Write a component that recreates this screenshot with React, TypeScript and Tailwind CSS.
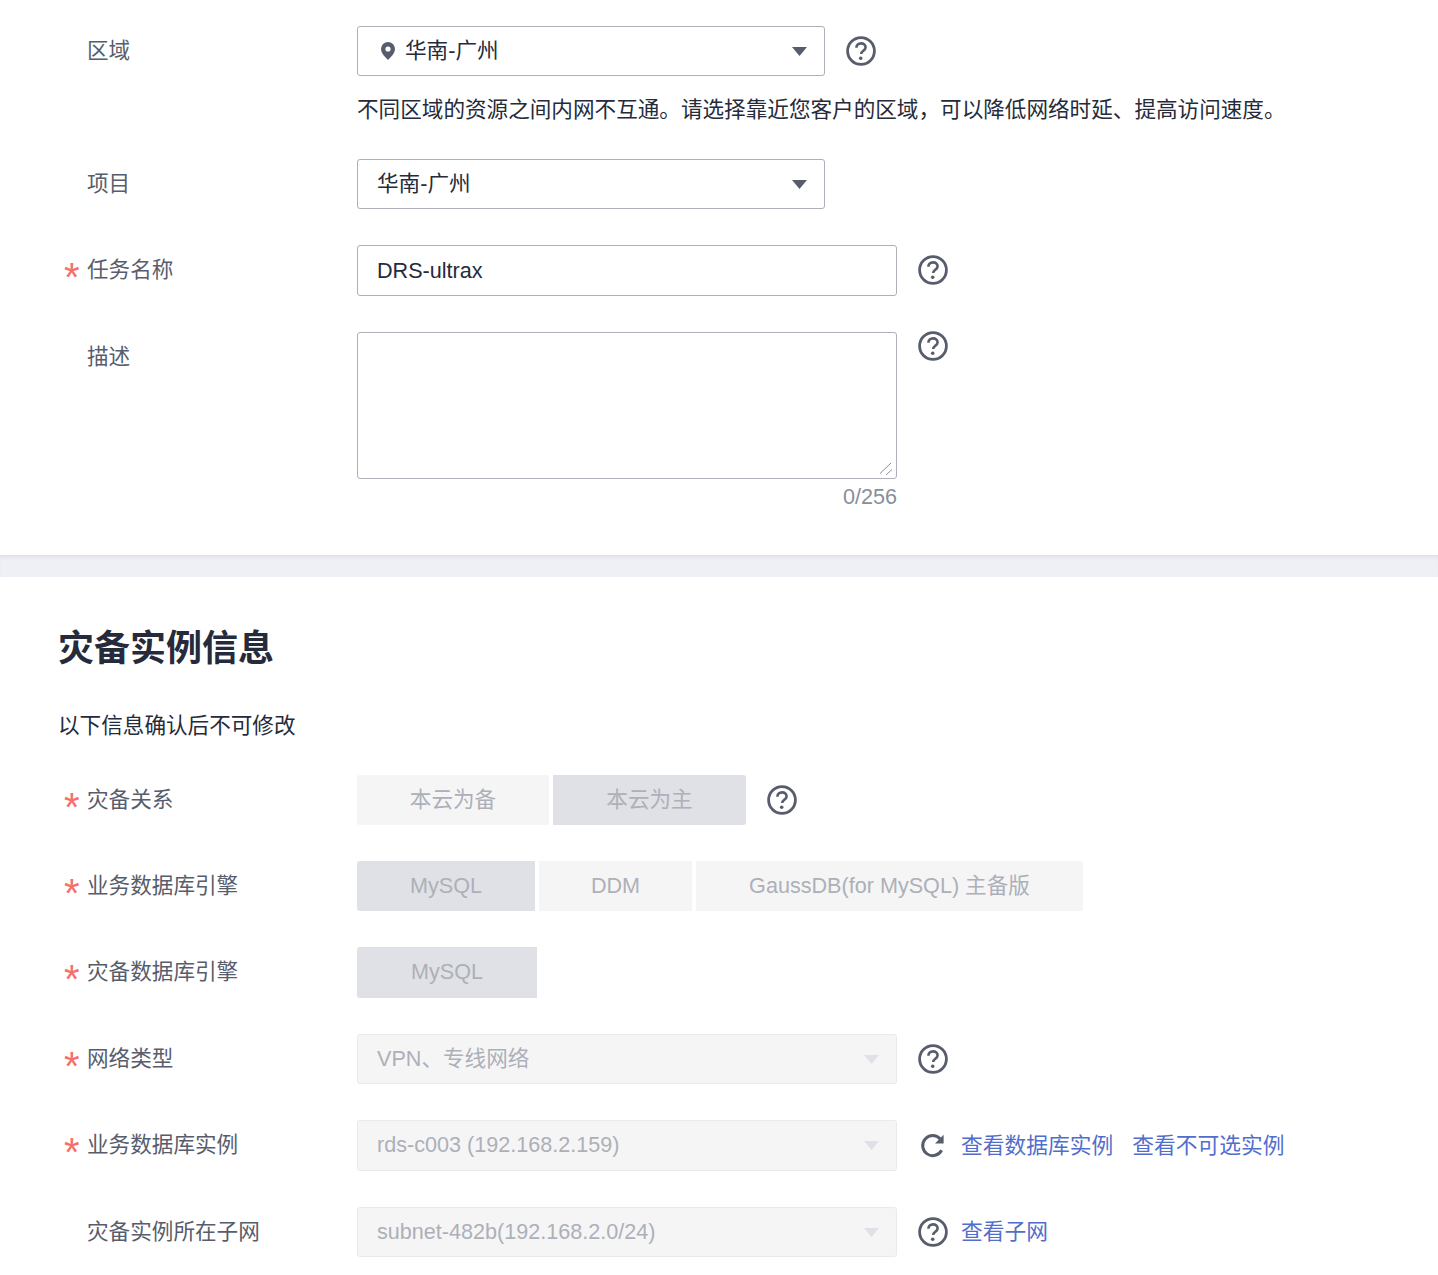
import type { ReactNode } from "react";

function HelpIcon({ className = "" }: { className?: string }) {
  return (
    <svg width="30" height="30" viewBox="0 0 30 30" fill="none" className={`shrink-0 ${className}`}>
      <circle cx="15" cy="15" r="13.4" stroke="#575d6c" strokeWidth="2.8" />
      <path
        d="M10.4 11.8c0-2.7 2.1-4.4 4.7-4.4s4.5 1.6 4.5 3.9c0 1.8-1 2.7-2.4 3.6-1.4.9-2 1.5-2 3.2"
        stroke="#575d6c"
        strokeWidth="2.6"
      />
      <circle cx="14.7" cy="22.2" r="1.8" fill="#575d6c" />
    </svg>
  );
}

function RefreshIcon() {
  return (
    <svg width="26" height="26" viewBox="0 0 26 26" fill="none" className="shrink-0">
      <path d="M21.6 17.2A10 10 0 1 1 20.2 6" stroke="#575d6c" strokeWidth="3" />
      <path d="M23.6 1.8v8.6H15z" fill="#575d6c" />
    </svg>
  );
}

function PinIcon() {
  return (
    <svg width="14" height="18" viewBox="0 0 14 18" className="shrink-0">
      <path
        fillRule="evenodd"
        d="M7 0a7 7 0 0 1 7 7c0 4-4 8-7 11C4 15 0 11 0 7a7 7 0 0 1 7-7zm0 4.4a2.6 2.6 0 1 0 0 5.2 2.6 2.6 0 0 0 0-5.2z"
        fill="#575d6c"
      />
    </svg>
  );
}

function Arrow({ disabled }: { disabled?: boolean }) {
  return (
    <svg width="15" height="9" viewBox="0 0 15 9" className="shrink-0">
      <path d="M0 0h15L7.5 9z" fill={disabled ? "#dfe1e6" : "#575d6c"} />
    </svg>
  );
}

function Row({
  label,
  required,
  className = "mb-[36px]",
  children,
}: {
  label: string;
  required?: boolean;
  className?: string;
  children: ReactNode;
}) {
  return (
    <div className={`flex items-start ${className}`}>
      <div className="flex h-[50px] w-[357px] shrink-0 items-center pl-[64px] text-[#575d6c]">
        <span className="w-[23px] shrink-0 text-[#f66f6a]">
          {required && <span className="relative -top-[1px] block h-[24px] text-[40px] leading-[40px]">*</span>}
        </span>
        <span>{label}</span>
      </div>
      {children}
    </div>
  );
}

function Select({ value, pin }: { value: string; pin?: boolean }) {
  return (
    <div className="flex h-[50px] w-[468px] items-center rounded-[3px] border border-[#adb0b8] bg-white pr-[17px] text-[#252b3a]">
      {pin ? (
        <span className="flex items-center pl-[23px]">
          <PinIcon />
          <span className="ml-[10px]">{value}</span>
        </span>
      ) : (
        <span className="pl-[19px]">{value}</span>
      )}
      <span className="ml-auto">
        <Arrow />
      </span>
    </div>
  );
}

function DisabledSelect({ value, height = "h-[50px]" }: { value: string; height?: string }) {
  return (
    <div className={`flex w-[540px] shrink-0 items-center rounded-[3px] border border-[#e9eaed] bg-[#f5f5f6] pr-[17px] pl-[19px] text-[#adb0b8] ${height}`}>
      <span>{value}</span>
      <span className="ml-auto">
        <Arrow disabled />
      </span>
    </div>
  );
}

function Segment({ text, width, active, shape = "" }: { text: string; width: string; active?: boolean; shape?: string }) {
  return (
    <div className={`flex h-full items-center justify-center text-[#adb0b8] ${width} ${shape} ${active ? "bg-[#dfe1e6]" : "bg-[#f5f5f6]"}`}>
      {text}
    </div>
  );
}

export default function App() {
  return (
    <div className="bg-white font-['Liberation_Sans','Noto_Sans_CJK_SC',sans-serif] text-[21.6px] h-[1275px] overflow-hidden">
      <section className="h-[555px] pt-[26px]">
        <Row label="区域" className="mb-[32px]">
          <div>
            <div className="flex items-center">
              <Select value="华南-广州" pin />
              <HelpIcon className="ml-[21px]" />
            </div>
            <p className="mt-[17px] h-[34px] whitespace-nowrap leading-[34px] text-[#252b3a]">
              不同区域的资源之间内网不互通。请选择靠近您客户的区域，可以降低网络时延、提高访问速度。
            </p>
          </div>
        </Row>
        <Row label="项目">
          <Select value="华南-广州" />
        </Row>
        <Row label="任务名称" required>
          <div className="flex items-start">
            <input
              readOnly
              value="DRS-ultrax"
              className="h-[51px] w-[540px] rounded-[3px] border border-[#adb0b8] px-[19px] text-[#252b3a] outline-none"
            />
            <HelpIcon className="mt-[10px] ml-[21px]" />
          </div>
        </Row>
        <Row label="描述" className="">
          <div>
            <div className="flex items-start">
              <div className="relative h-[147px] w-[540px]">
                <textarea readOnly className="block h-full w-full resize-none rounded-[3px] border border-[#adb0b8] outline-none" />
                <svg width="14" height="14" viewBox="0 0 14 14" className="absolute right-[4px] bottom-[3px]">
                  <path d="M1 11.5 12 1M7 13l6-5.5" stroke="#8a8e99" strokeWidth="1" fill="none" />
                </svg>
              </div>
              <HelpIcon className="-mt-px ml-[21px]" />
            </div>
            <div className="w-[540px] text-right leading-[36px] text-[#8a8e99]">0/256</div>
          </div>
        </Row>
      </section>

      <div className="h-[22px] bg-[#eef0f5] shadow-[inset_0_4px_4px_-2px_rgba(0,0,0,0.07)]" />

      <section>
        <h2 className="mt-[50px] h-[44px] pl-[58px] text-[36px] leading-[44px] font-bold text-[#252b3a]">灾备实例信息</h2>
        <p className="mt-[41px] mb-[35px] h-[28px] pl-[58px] leading-[28px] text-[#252b3a]">以下信息确认后不可修改</p>

        <Row label="灾备关系" required>
          <div className="flex h-[50px] items-center gap-[4px]">
            <Segment text="本云为备" width="w-[192px]" shape="rounded-l-[3px]" />
            <Segment text="本云为主" width="w-[193px]" active shape="rounded-r-[3px]" />
            <HelpIcon className="ml-[17px]" />
          </div>
        </Row>
        <Row label="业务数据库引擎" required>
          <div className="flex h-[50px] items-center gap-[4px]">
            <Segment text="MySQL" width="w-[178px]" active shape="rounded-l-[3px]" />
            <Segment text="DDM" width="w-[153px]" />
            <Segment text="GaussDB(for MySQL) 主备版" width="w-[387px]" shape="rounded-r-[3px]" />
          </div>
        </Row>
        <Row label="灾备数据库引擎" required>
          <div className="h-[51px]">
            <Segment text="MySQL" width="w-[180px]" active shape="rounded-l-[3px]" />
          </div>
        </Row>
        <Row label="网络类型" required>
          <div className="flex items-center">
            <DisabledSelect value="VPN、专线网络" />
            <HelpIcon className="ml-[21px]" />
          </div>
        </Row>
        <Row label="业务数据库实例" required>
          <div className="flex h-[51px] items-center">
            <DisabledSelect value="rds-c003 (192.168.2.159)" height="h-[51px]" />
            <span className="ml-[23px]">
              <RefreshIcon />
            </span>
            <a className="mt-[2px] ml-[15px] text-[21.75px] text-[#526ecc]">查看数据库实例</a>
            <a className="mt-[2px] ml-[19px] text-[21.75px] text-[#526ecc]">查看不可选实例</a>
          </div>
        </Row>
        <Row label="灾备实例所在子网" className="">
          <div className="flex items-center">
            <DisabledSelect value="subnet-482b(192.168.2.0/24)" />
            <HelpIcon className="ml-[21px]" />
            <a className="ml-[13px] text-[21.75px] text-[#526ecc]">查看子网</a>
          </div>
        </Row>
      </section>
    </div>
  );
}
